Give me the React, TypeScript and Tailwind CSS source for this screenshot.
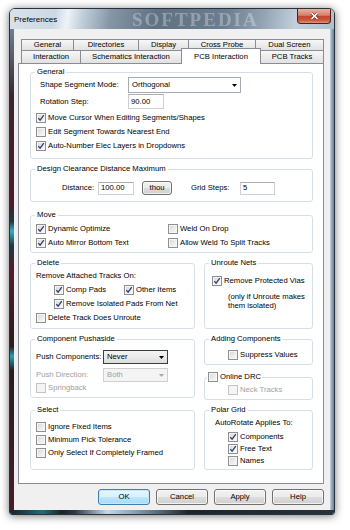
import React from "react";

const tabBase =
  "flex items-center justify-center leading-none border-[#898c95] bg-[linear-gradient(180deg,#f7f7f7_0%,#ececec_50%,#e1e1e1_100%)]";

function Check({ checked = false, disabled = false }: { checked?: boolean; disabled?: boolean }) {
  return (
    <span
      className={`flex w-[10px] h-[10px] shrink-0 items-center justify-center border ${
        disabled
          ? "border-[#c4c4c4] bg-[#f4f4f4]"
          : "border-[#8e8f8f] bg-[linear-gradient(135deg,#d6d6d6_0%,#ececec_55%,#fafafa_100%)] shadow-[inset_0_0_0_1px_#f6f6f6]"
      }`}
    >
      {checked && (
        <svg viewBox="0 0 8 8" className="w-[8px] h-[8px]">
          <path d="M1.3 4.1 L3.1 6.2 L6.8 1.2" fill="none" stroke="#2e3f6e" strokeWidth="1.3" />
        </svg>
      )}
    </span>
  );
}

function CheckRow({
  label,
  checked = false,
  disabled = false,
  className = "h-[14px]",
}: {
  label: string;
  checked?: boolean;
  disabled?: boolean;
  className?: string;
}) {
  return (
    <div className={`flex items-center gap-[2px] whitespace-nowrap ${className}`}>
      <Check checked={checked} disabled={disabled} />
      <span className={disabled ? "text-[#a0a0a0]" : ""}>{label}</span>
    </div>
  );
}

function Group({
  title,
  className = "",
  children,
}: {
  title: string;
  className?: string;
  children: React.ReactNode;
}) {
  return (
    <fieldset className={`border border-[#d5dfe5] rounded-[3px] ${className}`}>
      <legend className="ml-[4px] px-[2px] leading-[10px] whitespace-nowrap">{title}</legend>
      {children}
    </fieldset>
  );
}

function Combo({
  value,
  className,
  mode = "normal",
}: {
  value: string;
  className: string;
  mode?: "normal" | "focus" | "disabled";
}) {
  const look =
    mode === "focus"
      ? "border-[#3d3d3d] bg-[linear-gradient(180deg,#f3f3f3_0%,#ebebeb_50%,#dcdcdc_100%)]"
      : mode === "disabled"
      ? "border-[#cfcfcf] bg-[#f4f4f4] text-[#a0a0a0]"
      : "border-[#a5acb5] bg-white";
  return (
    <div className={`flex items-center justify-between border pl-[3px] pr-[3px] ${look} ${className}`}>
      <span>{value}</span>
      <svg viewBox="0 0 5 3" className="w-[5px] h-[3px]">
        <path d="M0 0H5L2.5 3Z" fill={mode === "disabled" ? "#a8a8a8" : "#000"} />
      </svg>
    </div>
  );
}

function Field({ value, className }: { value: string; className: string }) {
  return (
    <div className={`flex items-center border border-[#cdd0d6] border-t-[#abadb3] bg-white pl-[2px] ${className}`}>
      {value}
    </div>
  );
}

function Btn({ label, primary = false, className }: { label: string; primary?: boolean; className: string }) {
  return (
    <div
      className={`flex items-center justify-center rounded-[3px] border ${
        primary
          ? "border-[#3c7fb1] bg-[linear-gradient(180deg,#eaf6fd_0%,#d9f0fc_49%,#bee6fd_50%,#a7d9f5_100%)] shadow-[inset_0_0_0_1px_#c6e8fa]"
          : "border-[#707070] bg-[linear-gradient(180deg,#f2f2f2_0%,#ebebeb_49%,#dddddd_50%,#cfcfcf_100%)] shadow-[inset_0_0_0_1px_rgba(255,255,255,0.7)]"
      } ${className}`}
    >
      {label}
    </div>
  );
}

export default function App() {
  return (
    <div className="w-[350px] h-[530px] bg-white overflow-hidden text-[7.7px] text-black font-['Liberation_Sans',Arial,sans-serif]">
      <div className="ml-[9px] mt-[8px] w-[326px] h-[507px] flex flex-col rounded-t-[6px] rounded-b-[3px] border border-[#29313a] overflow-hidden shadow-[0_1px_8px_rgba(0,0,0,0.55)]">
        {/* title bar */}
        <div className="relative h-[20px] flex items-start overflow-hidden bg-[linear-gradient(100deg,#d9e2eb_0%,#ccd8e3_14%,#eef3f7_18%,#c6d3de_22%,#8597a7_31%,#5f7182_45%,#6b7d8e_66%,#93a5b5_78%,#c3d0db_88%,#aebfcd_100%)]">
          <span className="mt-[6px] ml-[4px] text-[8px] leading-[10px]">Preferences</span>
          <span className="absolute left-[122px] top-[1px] text-[19px] leading-[19px] font-bold tracking-[2px] text-white/30 blur-[0.5px] font-['Liberation_Serif',serif]">
            SOFTPEDIA
          </span>
          <div className="relative ml-auto mr-[3px] w-[34px] h-[15px] flex items-center justify-center rounded-b-[4px] border border-t-0 border-[#5a1c12] bg-[linear-gradient(180deg,#eab0a2_0%,#d7806b_45%,#c2462c_52%,#c65a3f_80%,#e3957a_100%)]">
            <svg viewBox="0 0 9 8" className="w-[9px] h-[8px]">
              <path d="M1.5 1.2 L7.5 6.8 M7.5 1.2 L1.5 6.8" stroke="#5b1a0f" strokeWidth="2.8" />
              <path d="M1.5 1.2 L7.5 6.8 M7.5 1.2 L1.5 6.8" stroke="#ffffff" strokeWidth="1.6" />
            </svg>
          </div>
        </div>

        <div className="flex flex-1">
          {/* left glass edge */}
          <div className="w-[4px] bg-[linear-gradient(180deg,#6d8092_0%,#3a2530_14%,#4b1b29_36%,#1d3a42_40%,#38aebe_42%,#1d3a42_45%,#521d2c_50%,#2a1b21_66%,#2c9fb0_68%,#2a1b21_71%,#43202b_100%)]" />

          {/* client area */}
          <div className="w-[316px] bg-[#f0f0f0] flex flex-col pt-[10px]">
            {/* tabs row 1 */}
            <div className="ml-[7px] flex h-[11px]">
              <div className={`${tabBase} w-[52px] border-l border-t`}>General</div>
              <div className={`${tabBase} w-[65px] border-l border-t`}>Directories</div>
              <div className={`${tabBase} w-[50px] border-l border-t`}>Display</div>
              <div className={`${tabBase} w-[67px] border-l border-t`}>Cross Probe</div>
              <div className={`${tabBase} w-[69px] border-l border-t border-r`}>Dual Screen</div>
            </div>
            {/* tabs row 2 */}
            <div className="ml-[7px] flex items-start h-[13px]">
              <div className={`${tabBase} h-[13px] w-[59px] border-l border-t`}>Interaction</div>
              <div className={`${tabBase} h-[13px] w-[101px] border-l border-t`}>Schematics Interaction</div>
              <div className="relative z-10 -mt-[2px] h-[16px] w-[80px] flex items-center justify-center leading-none bg-white border-l border-t border-r border-[#898c95]">
                PCB Interaction
              </div>
              <div className={`${tabBase} h-[13px] w-[63px] border-t border-r`}>PCB Tracks</div>
            </div>

            {/* tab page */}
            <div className="ml-[4px] w-[306px] h-[421px] border border-[#898c95] bg-white pt-[3px] pl-[11px] pr-[10px] flex flex-col">
              <Group title="General">
                <div className="pl-[5px] pb-[5px]">
                  <div className="flex items-center h-[16px]">
                    <span className="w-[92px] pl-[4px]">Shape Segment Mode:</span>
                    <Combo value="Orthogonal" className="w-[113px] h-[16px]" />
                  </div>
                  <div className="flex items-center h-[15px] mt-[1px]">
                    <span className="w-[92px] pl-[4px]">Rotation Step:</span>
                    <Field value="90.00" className="w-[36px] h-[15px]" />
                  </div>
                  <div className="mt-[2px]">
                    <CheckRow label="Move Cursor When Editing Segments/Shapes" checked />
                    <CheckRow label="Edit Segment Towards Nearest End" />
                    <CheckRow label="Auto-Number Elec Layers in Dropdowns" checked />
                  </div>
                </div>
              </Group>

              <Group title="Design Clearance Distance Maximum" className="mt-[5px]">
                <div className="pl-[5px] pb-[6px]">
                  <div className="mt-[7px] flex items-center h-[14px]">
                    <span className="ml-[26px] w-[36px]">Distance:</span>
                    <Field value="100.00" className="w-[36px] h-[13px]" />
                    <Btn label="thou" className="ml-[8px] w-[30px] h-[14px]" />
                    <span className="ml-[19px] w-[49px]">Grid Steps:</span>
                    <Field value="5" className="w-[35px] h-[13px]" />
                  </div>
                </div>
              </Group>

              <Group title="Move" className="mt-[8px]">
                <div className="pl-[5px] pb-[2px] mt-[2px] grid grid-cols-[132px_1fr]">
                  <CheckRow label="Dynamic Optimize" checked />
                  <CheckRow label="Weld On Drop" />
                  <CheckRow label="Auto Mirror Bottom Text" checked />
                  <CheckRow label="Allow Weld To Split Tracks" />
                </div>
              </Group>

              <div className="mt-[5px] flex gap-[9px]">
                <Group title="Delete" className="w-[165px]">
                  <div className="pl-[5px] pb-[3px] mt-[1px]">
                    <div className="h-[14px] flex items-center">Remove Attached Tracks On:</div>
                    <div className="h-[14px] flex items-center pl-[18px]">
                      <CheckRow label="Comp Pads" checked className="h-[14px] w-[70px]" />
                      <CheckRow label="Other Items" checked />
                    </div>
                    <div className="pl-[18px]">
                      <CheckRow label="Remove Isolated Pads From Net" checked />
                    </div>
                    <CheckRow label="Delete Track Does Unroute" />
                  </div>
                </Group>
                <Group title="Unroute Nets" className="flex-1">
                  <div className="pl-[7px] mt-[6px]">
                    <CheckRow label="Remove Protected Vias" checked />
                    <div className="mt-[4px] pl-[16px] leading-[9px]">
                      (only if Unroute makes
                      <br />
                      them isolated)
                    </div>
                  </div>
                </Group>
              </div>

              <div className="mt-[5px] flex items-start gap-[9px]">
                <Group title="Component Pushaside" className="w-[165px]">
                  <div className="pl-[5px] pb-[3px]">
                    <div className="mt-[6px] h-[14px] flex items-center">
                      <span className="w-[67px] whitespace-nowrap">Push Components:</span>
                      <Combo value="Never" mode="focus" className="w-[65px] h-[14px]" />
                    </div>
                    <div className="mt-[4px] h-[14px] flex items-center">
                      <span className="w-[67px] whitespace-nowrap text-[#a0a0a0]">Push Direction:</span>
                      <Combo value="Both" mode="disabled" className="w-[65px] h-[14px]" />
                    </div>
                    <CheckRow label="Springback" disabled className="h-[12px]" />
                  </div>
                </Group>
                <div className="flex-1 flex flex-col">
                  <Group title="Adding Components">
                    <div className="pl-[23px] mt-[4px] pb-[2px]">
                      <CheckRow label="Suppress Values" />
                    </div>
                  </Group>
                  <fieldset className="mt-[6px] border border-[#d5dfe5] rounded-[3px]">
                    <legend className="ml-[2px] px-[1px]">
                      <CheckRow label="Online DRC" className="h-[12px]" />
                    </legend>
                    <div className="pl-[23px] mt-[1px] pb-[3px]">
                      <CheckRow label="Neck Tracks" disabled className="h-[12px]" />
                    </div>
                  </fieldset>
                </div>
              </div>

              <div className="mt-[5px] flex gap-[9px]">
                <Group title="Select" className="w-[165px]">
                  <div className="pl-[5px] mt-[5px] pb-[10px]">
                    <CheckRow label="Ignore Fixed Items" className="h-[13px]" />
                    <CheckRow label="Minimum Pick Tolerance" className="h-[13px]" />
                    <CheckRow label="Only Select If Completely Framed" className="h-[13px]" />
                  </div>
                </Group>
                <Group title="Polar Grid" className="flex-1">
                  <div className="mt-[2px] pb-[2px]">
                    <div className="pl-[10px] h-[12px] flex items-center">AutoRotate Applies To:</div>
                    <div className="pl-[23px] mt-[2px]">
                      <CheckRow label="Components" checked className="h-[12px]" />
                      <CheckRow label="Free Text" checked className="h-[12px]" />
                      <CheckRow label="Names" className="h-[12px]" />
                    </div>
                  </div>
                </Group>
              </div>
            </div>

            {/* dialog buttons */}
            <div className="mt-[5px] pr-[6px] flex justify-end gap-[6px]">
              <Btn label="OK" primary className="w-[52px] h-[16px]" />
              <Btn label="Cancel" className="w-[52px] h-[16px]" />
              <Btn label="Apply" className="w-[52px] h-[16px]" />
              <Btn label="Help" className="w-[52px] h-[16px]" />
            </div>
          </div>

          {/* right glass edge */}
          <div className="w-[4px] bg-[linear-gradient(90deg,#c9d6e1_0%,#8fa8bc_45%,#6a8295_100%)]" />
        </div>
        {/* bottom glass edge */}
        <div className="h-[4px] bg-[linear-gradient(90deg,#1b2228_0%,#246a78_10%,#1b2228_16%,#2a3a48_20%,#c6d7e5_30%,#8aa4b8_38%,#1d252c_55%,#28323a_100%)]" />
      </div>
    </div>
  );
}
